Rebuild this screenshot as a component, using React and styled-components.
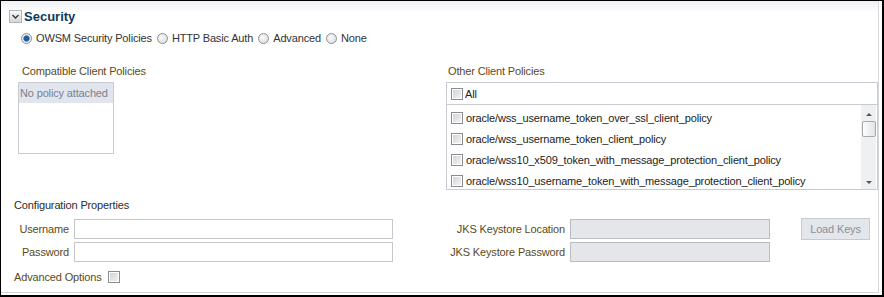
import React from "react";
import styled, { createGlobalStyle } from "styled-components";

const GlobalStyle = createGlobalStyle`
  html, body { margin: 0; padding: 0; background: #fff; }
  body { font-family: "Liberation Sans", Arial, sans-serif; font-size: 11px; letter-spacing: -0.15px; }
  * { box-sizing: border-box; }
`;

const Frame = styled.div`
  width: 884px;
  height: 297px;
  border-left: 1px solid #000;
  border-top: 1px solid #000;
  border-right: 2px solid #000;
  border-bottom: 2px solid #000;
  background: linear-gradient(#eef0f4 0px, #fbfbfc 9px, #fff 12px);
  box-shadow: inset -3px -2px 0 #fff, inset -4px -3px 0 #d6d8dc;
  padding: 8px 0 0 8px;
  display: flex;
  flex-direction: column;
  color: #333;
`;

const Header = styled.div`
  display: flex;
  align-items: center;
  gap: 2px;
  height: 15px;
  font-size: 13px;
  font-weight: bold;
  letter-spacing: 0;
  color: #0c3b5c;
`;

const RadioRow = styled.div`
  display: flex;
  align-items: center;
  margin: 7px 0 0 12px;
  height: 14px;
  gap: 5px;
  color: #333;
`;

const RadioItem = styled.label`
  display: flex;
  align-items: center;
  gap: 4px;
`;

const Radio = styled.span`
  width: 11px;
  height: 11px;
  border-radius: 50%;
  border: 1px solid #8d8f92;
  background: ${(p) =>
    p.checked
      ? "radial-gradient(circle, #1f5d96 0 2.5px, #6f9ccc 3px, #e8ebef 3.6px)"
      : "radial-gradient(circle at 40% 40%, #fafafa, #d4d6d9)"};
`;

const Columns = styled.div`
  display: flex;
  margin: 20px 0 0 9px;
  height: 125px;
`;

const Column = styled.div`
  display: flex;
  flex-direction: column;
  width: ${(p) => p.width}px;
  margin-left: ${(p) => p.offset || 0}px;
`;

const FieldLabel = styled.div`
  height: 13px;
  line-height: 13px;
  white-space: nowrap;
  padding-left: ${(p) => p.indent}px;
  color: #5a4a22;
  margin-bottom: 4px;
`;

const ListBox = styled.div`
  border: 1px solid #c9cbd2;
  height: ${(p) => p.height}px;
  background: #fff;
  display: flex;
  flex-direction: column;
  overflow: hidden;
`;

const EmptyRow = styled.div`
  height: 20px;
  line-height: 20px;
  background: #e1e5ee;
  color: #7b8190;
  padding-left: 1px;
  white-space: nowrap;
`;

const AllRow = styled.div`
  flex: none;
  height: 22px;
  display: flex;
  align-items: center;
  gap: 2px;
  padding-left: 4px;
  border-bottom: 1px solid #c9cbd2;
  color: #222;
`;

const ScrollArea = styled.div`
  flex: 1;
  min-height: 0;
  display: flex;
`;

const Rows = styled.div`
  flex: 1;
  padding-top: 2px;
  display: flex;
  flex-direction: column;
`;

const PolicyRow = styled.div`
  flex: none;
  height: 21px;
  display: flex;
  align-items: center;
  gap: 3px;
  padding-left: 4px;
  color: #222;
  white-space: nowrap;
`;

const Scrollbar = styled.div`
  width: 15px;
  margin: 0 1px 0 0;
  background: #eef0f2;
  display: flex;
  flex-direction: column;
  align-items: center;
  padding-top: 8px;
`;

const Thumb = styled.div`
  width: 14px;
  height: 16px;
  margin-top: 5px;
  border: 1px solid #a6a8ac;
  border-radius: 2px;
  background: linear-gradient(90deg, #fdfdfd, #e2e4e7);
`;

const Arrow = styled.div`
  width: 0;
  height: 0;
  border-left: 3px solid transparent;
  border-right: 3px solid transparent;
  ${(p) =>
    p.down
      ? "border-top: 3px solid #555; margin-top: auto; margin-bottom: 5px;"
      : "border-bottom: 3px solid #555;"}
`;

const Box = styled.span`
  display: inline-block;
  width: 12px;
  height: 12px;
  flex: none;
  border: 1px solid #8a8c90;
  background: linear-gradient(135deg, #cfd1d4, #f6f6f7);
  box-shadow: inset 0 0 0 1px #fff;
`;

const Config = styled.div`
  display: flex;
  flex-direction: column;
  margin: 9px 0 0 5px;
`;

const SectionTitle = styled.div`
  height: 13px;
  line-height: 13px;
  color: #2b2b2b;
`;

const FieldGrid = styled.div`
  display: grid;
  grid-template-columns: 55px 319px 167px 200px 95px;
  grid-auto-rows: 20px;
  column-gap: 5px;
  row-gap: 3px;
  margin-top: 7px;
  align-items: center;
`;

const Label = styled.span`
  text-align: right;
  color: #5a4a22;
  white-space: nowrap;
`;

const Input = styled.div`
  height: 20px;
  border: 1px solid ${(p) => (p.disabled ? "#b9bcc3" : "#c4c6cb")};
  background: ${(p) => (p.disabled ? "#e4e6ea" : "#fff")};
`;

const Button = styled.div`
  height: 22px;
  margin-left: 26px;
  width: 69px;
  border: 1px solid #c7cad0;
  background: #e3e6eb;
  color: #8c9099;
  display: flex;
  align-items: center;
  justify-content: center;
`;

const AdvancedRow = styled.div`
  display: flex;
  align-items: center;
  gap: 6px;
  margin-top: 8px;
  height: 13px;
  color: #5a4a22;
`;

const Chevron = () => (
  <svg width="13" height="13" viewBox="0 0 13 13">
    <defs>
      <linearGradient id="cg" x1="0" y1="0" x2="0" y2="1">
        <stop offset="0" stopColor="#fafafa" />
        <stop offset="1" stopColor="#d3d5d8" />
      </linearGradient>
    </defs>
    <rect x="0.5" y="0.5" width="12" height="12" fill="url(#cg)" stroke="#b3b5b9" />
    <path d="M3.5 5 L6.5 8 L9.5 5" fill="none" stroke="#333" strokeWidth="1.3" />
  </svg>
);

const policies = [
  "oracle/wss_username_token_over_ssl_client_policy",
  "oracle/wss_username_token_client_policy",
  "oracle/wss10_x509_token_with_message_protection_client_policy",
  "oracle/wss10_username_token_with_message_protection_client_policy",
];

export default function App() {
  return (
    <>
      <GlobalStyle />
      <Frame>
        <Header>
          <Chevron />
          <span>Security</span>
        </Header>
        <RadioRow>
          <RadioItem><Radio checked />OWSM Security Policies</RadioItem>
          <RadioItem><Radio />HTTP Basic Auth</RadioItem>
          <RadioItem><Radio />Advanced</RadioItem>
          <RadioItem><Radio />None</RadioItem>
        </RadioRow>
        <Columns>
          <Column width={96}>
            <FieldLabel indent={4}>Compatible Client Policies</FieldLabel>
            <ListBox height={72}>
              <EmptyRow>No policy attached</EmptyRow>
            </ListBox>
          </Column>
          <Column width={432} offset={332}>
            <FieldLabel indent={2}>Other Client Policies</FieldLabel>
            <ListBox height={108}>
              <AllRow><Box />All</AllRow>
              <ScrollArea>
                <Rows>
                  {policies.map((p) => (
                    <PolicyRow key={p}><Box />{p}</PolicyRow>
                  ))}
                </Rows>
                <Scrollbar>
                  <Arrow />
                  <Thumb />
                  <Arrow down />
                </Scrollbar>
              </ScrollArea>
            </ListBox>
          </Column>
        </Columns>
        <Config>
          <SectionTitle>Configuration Properties</SectionTitle>
          <FieldGrid>
            <Label>Username</Label>
            <Input />
            <Label>JKS Keystore Location</Label>
            <Input disabled />
            <Button>Load Keys</Button>
            <Label>Password</Label>
            <Input />
            <Label>JKS Keystore Password</Label>
            <Input disabled />
          </FieldGrid>
          <AdvancedRow>
            Advanced Options <Box />
          </AdvancedRow>
        </Config>
      </Frame>
    </>
  );
}
